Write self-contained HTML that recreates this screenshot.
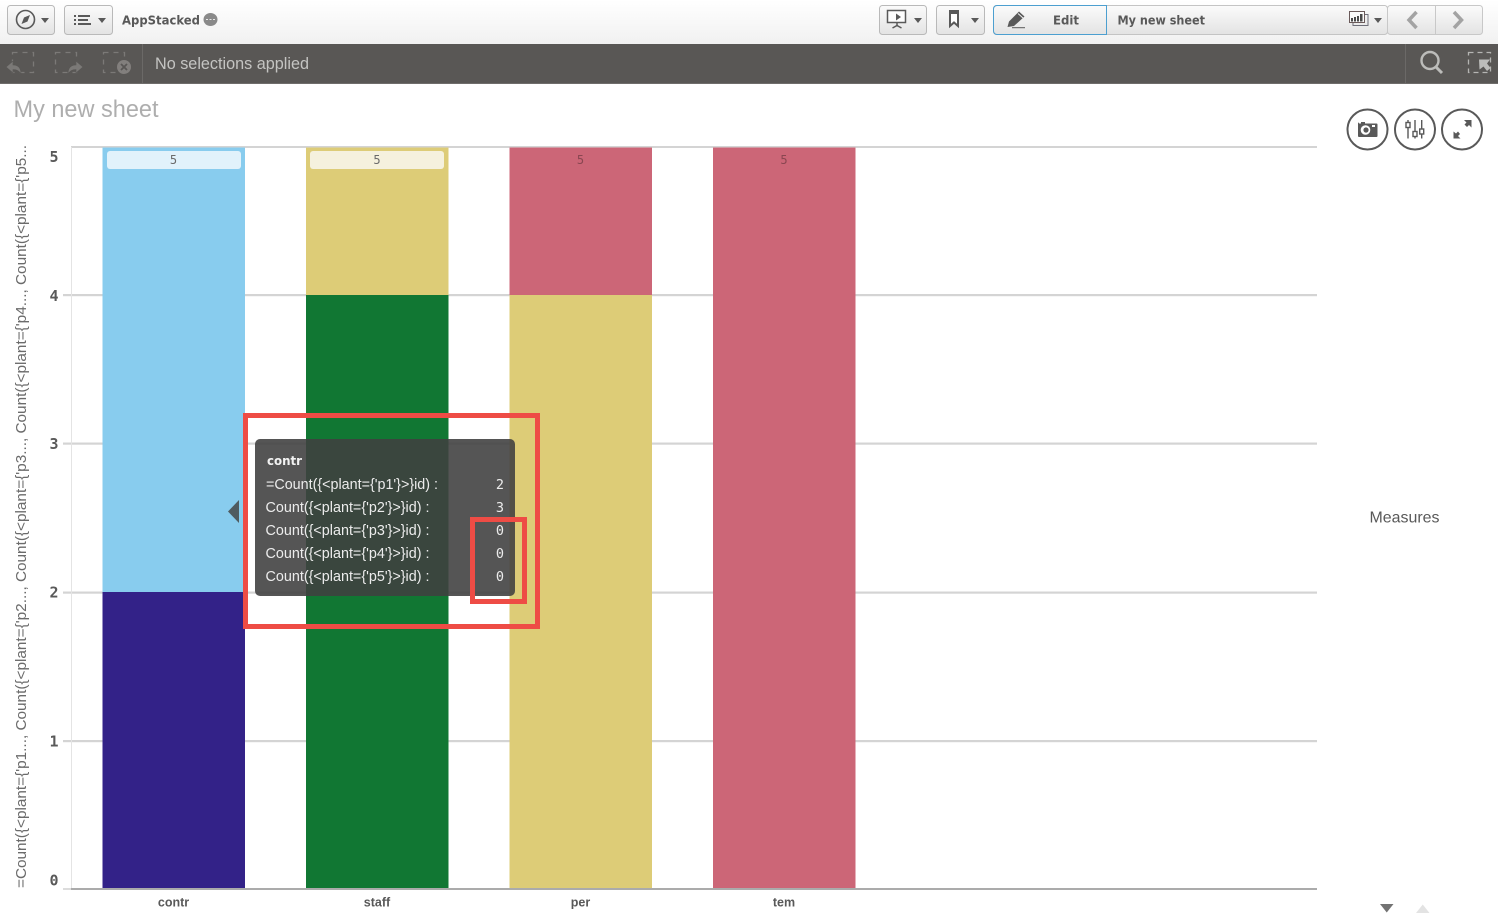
<!DOCTYPE html>
<html lang="en">
<head>
<meta charset="utf-8">
<title>My new sheet</title>
<style>
html,body{margin:0;padding:0;background:#fff;width:1498px;height:921px;overflow:hidden}
svg{display:block}
text{font-family:"Liberation Sans",sans-serif}
text.b{font-family:"DejaVu Sans",sans-serif;font-weight:700}
.m text,text.m{font-family:"DejaVu Sans Mono",monospace}
</style>
</head>
<body>
<svg width="1498" height="921" viewBox="0 0 1498 921" xmlns="http://www.w3.org/2000/svg">
<defs>
<linearGradient id="top" x1="0" y1="0" x2="0" y2="1"><stop offset="0" stop-color="#ffffff"/><stop offset="1" stop-color="#f1f1f1"/></linearGradient>
<linearGradient id="btn" x1="0" y1="0" x2="0" y2="1"><stop offset="0" stop-color="#fbfbfb"/><stop offset="1" stop-color="#e3e3e3"/></linearGradient>
</defs>
<rect width="1498" height="921" fill="#fff"/>

<!-- top bar -->
<rect width="1498" height="44" fill="url(#top)"/>
<rect x="7.500" y="5.500" width="47" height="29" rx="3" fill="url(#btn)" stroke="#b9b9b9"/>
<circle cx="25.500" cy="19.500" r="9" fill="none" stroke="#595959" stroke-width="1.600"/>
<path d="M30 15l-6 2.500-2.500 6.500 6-2.500z" fill="#595959"/>
<path d="M41 18h8l-4 5z" fill="#595959"/>
<rect x="64.500" y="5.500" width="48" height="29" rx="3" fill="url(#btn)" stroke="#b9b9b9"/>
<path d="M74 15h2v2h-2zM74 19h2v2h-2zM74 23h2v2h-2zM78 15h12v2H78zM78 19h10v2H78zM78 23h13v2H78z" fill="#595959"/>
<path d="M98 18h8l-4 5z" fill="#595959"/>
<text class="b" x="122" y="24.500" font-size="12.500" fill="#595959" textLength="78" lengthAdjust="spacingAndGlyphs">AppStacked</text>
<ellipse cx="210.500" cy="19.500" rx="7" ry="6.500" fill="#8a8a8a"/>
<path d="M206 19.500h2M209.500 19.500h2M213 19.500h2" stroke="#e8e8e8" stroke-width="1"/>

<rect x="879.500" y="5.500" width="47" height="29" rx="3" fill="url(#btn)" stroke="#b9b9b9"/>
<rect x="887.500" y="10.500" width="18" height="12" fill="#fdfdfd" stroke="#595959" stroke-width="1.500"/>
<path d="M896 13.500l5 3.500-5 3.500z" fill="#595959"/>
<path d="M897 23v3.500" stroke="#595959" stroke-width="1.500"/>
<path d="M892.500 28l4.500-2.500 4.500 2.500" stroke="#595959" stroke-width="1.500" fill="none"/>
<path d="M914 18h8l-4 5z" fill="#595959"/>
<rect x="936.500" y="5.500" width="48" height="29" rx="3" fill="url(#btn)" stroke="#b9b9b9"/>
<path d="M950 11h8v15l-4-3.500-4 3.500z" fill="#fff" stroke="#595959" stroke-width="2"/>
<path d="M949 10h10v4h-10z" fill="#595959"/>
<path d="M971 18h8l-4 5z" fill="#595959"/>

<rect x="993.500" y="5.500" width="394" height="29" rx="3" fill="url(#btn)" stroke="#c4c4c4"/>
<path d="M1106.500 5.500H997a3.500 3.500 0 0 0-3.500 3.500v22a3.500 3.500 0 0 0 3.500 3.500h109.500z" fill="url(#btn)" stroke="#4c9fd0"/>
<path d="M1007.500 27l1.500-5.500 10-10 5.500 5-10.500 9.500z" fill="#595959"/>
<path d="M1018 13.500l5 4.500" stroke="#f0f0f0" stroke-width="1"/>
<path d="M1012 27.700h13" stroke="#595959" stroke-width="1"/>
<text class="b" x="1053" y="24.500" font-size="12.500" fill="#595959" textLength="26" lengthAdjust="spacingAndGlyphs">Edit</text>
<text class="b" x="1117.500" y="24.500" font-size="12.500" fill="#595959" textLength="87.500" lengthAdjust="spacingAndGlyphs">My new sheet</text>
<path d="M1364.500 14.500h3.500v11h-15v-3" fill="none" stroke="#6f6f7a"/>
<rect x="1349.500" y="11.500" width="15" height="11" fill="#fafafa" stroke="#6a5a5a"/>
<path d="M1351 18h2v3.500h-2zM1354 17h2v4.500h-2zM1357 16h2v5.500h-2zM1360 14h2.500v7.500H1360z" fill="#4a4a4a"/>
<path d="M1374 18h8l-4 5z" fill="#595959"/>
<rect x="1387.500" y="5.500" width="95" height="29" rx="3" fill="url(#btn)" stroke="#c8c8c8"/>
<path d="M1435.500 6v28" stroke="#c8c8c8"/>
<path d="M1416.500 12l-7.500 8 7.500 8" fill="none" stroke="#a3a3a3" stroke-width="3.500"/>
<path d="M1454 12l7.500 8-7.500 8" fill="none" stroke="#a3a3a3" stroke-width="3.500"/>

<!-- selections bar -->
<rect y="44" width="1498" height="40" fill="#595755"/>
<rect y="83" width="1498" height="1" fill="#6f6d6b"/>
<rect x="142" y="44" width="1" height="39" fill="#6b6967"/>
<rect x="1405" y="44" width="1" height="39" fill="#6b6967"/>
<g fill="none" stroke="#7b7977" stroke-width="1.300" stroke-dasharray="5 5">
<rect x="12.500" y="52.500" width="21" height="20"/>
<rect x="55.500" y="52.500" width="21" height="20"/>
<rect x="103.500" y="52.500" width="21" height="20"/>
</g>
<path d="M6 67L13 61v4C18 65 21 68 21 74 19 71 17 69.500 13 69.500V73z" fill="#7b7977" stroke="#595755" stroke-width=".6"/>
<path d="M83 67L76 61v4C71 65 68 68 68 74 70 71 72 69.500 76 69.500V73z" fill="#7b7977" stroke="#595755" stroke-width=".6"/>
<circle cx="124" cy="67" r="7" fill="#827f7d"/>
<path d="M121 64l6 6M127 64l-6 6" stroke="#595755" stroke-width="1.800"/>
<text x="155" y="69" font-size="17" fill="#c4c4c2" textLength="154" lengthAdjust="spacingAndGlyphs">No selections applied</text>
<circle cx="1430" cy="60.500" r="8.500" fill="none" stroke="#bcbcba" stroke-width="2.400"/>
<path d="M1436 67l6 6" stroke="#bcbcba" stroke-width="3"/>
<rect x="1468.500" y="52.500" width="22" height="20" fill="none" stroke="#b5b5b3" stroke-width="1.300" stroke-dasharray="5 4"/>
<path d="M1479 59.500h11l-3 4 3.500 4.500-3.500 3-3.500-4.500-4 3z" fill="#bcbcba"/>

<!-- title -->
<text x="13.500" y="117" font-size="24" fill="#aeaeae" textLength="145" lengthAdjust="spacingAndGlyphs">My new sheet</text>

<!-- round tool buttons -->
<g fill="#fff" stroke="#595959" stroke-width="2">
<circle cx="1367.500" cy="129.500" r="20"/>
<circle cx="1415" cy="129.500" r="20"/>
<circle cx="1462" cy="129.500" r="20"/>
</g>
<path d="M1359 123.500h2v-1.500h4v1.500h11.500a1 1 0 0 1 1 1v11.500a1 1 0 0 1-1 1H1359a1 1 0 0 1-1-1v-12.500a1 1 0 0 1 1-1z" fill="#595959"/>
<circle cx="1365.500" cy="130" r="4.800" fill="#fff"/>
<circle cx="1366" cy="130" r="2.600" fill="#595959"/>
<rect x="1372" y="125" width="3" height="2" fill="#fff"/>
<g stroke="#595959" stroke-width="1.400" fill="#fff">
<path d="M1408 120v18.500M1415 120v18.500M1421.700 120v18.500"/>
<rect x="1406" y="122.500" width="4" height="5"/>
<rect x="1413" y="131.500" width="4" height="5"/>
<rect x="1419.700" y="129" width="4" height="5"/>
</g>
<path d="M1464 120h7.500v7.500l-2.500-2.500-2 2-2.500-2.500 2-2z" fill="#595959"/>
<path d="M1453.500 131.500v7h7l-2.500-2.500 2-2-2-2.500-2 2z" fill="#595959"/>

<!-- axis and grid -->
<g fill="#d4d4d4">
<rect x="71" y="146" width="1246" height="2"/>
<rect x="63" y="294" width="1254" height="2.200"/>
<rect x="63" y="442.500" width="1254" height="2.200"/>
<rect x="63" y="591.500" width="1254" height="2.200"/>
<rect x="63" y="740" width="1254" height="2.200"/>
</g>
<rect x="71" y="147" width="1" height="742" fill="#e4e4e4"/>
<rect x="71" y="888" width="1246" height="2" fill="#ababab"/>
<rect x="63" y="888" width="8" height="2" fill="#dcdcdc"/>

<!-- bars -->
<rect x="102.500" y="147.500" width="142.500" height="444.500" fill="#88ccee"/>
<rect x="102.500" y="592" width="142.500" height="296" fill="#332288"/>
<rect x="306" y="147.500" width="142.500" height="147.500" fill="#ddcc77"/>
<rect x="306" y="295" width="142.500" height="593" fill="#117733"/>
<rect x="509.500" y="147.500" width="142.500" height="147.500" fill="#cc6677"/>
<rect x="509.500" y="295" width="142.500" height="593" fill="#ddcc77"/>
<rect x="713" y="147.500" width="142.500" height="740.500" fill="#cc6677"/>

<!-- value labels -->
<rect x="107" y="151" width="134" height="18" rx="3" fill="#e1f2fb"/>
<rect x="310" y="151" width="134" height="18" rx="3" fill="#f5f1dd"/>
<g font-size="12" text-anchor="middle" class="m">
<text x="173.500" y="164" fill="#6b6b6b">5</text>
<text x="377" y="164" fill="#6b6b6b">5</text>
<text x="580.500" y="164" fill="#8a4651">5</text>
<text x="784" y="164" fill="#8a4651">5</text>
</g>

<!-- y labels -->
<g class="m" font-size="15" font-weight="700" fill="#595959" text-anchor="middle">
<text x="54" y="162">5</text>
<text x="54" y="301">4</text>
<text x="54" y="449">3</text>
<text x="54" y="597.500">2</text>
<text x="54" y="746.500">1</text>
<text x="54" y="885.500">0</text>
</g>

<!-- y title -->
<text transform="translate(26 888) rotate(-90)" font-size="15" fill="#6b6b6b" textLength="743" lengthAdjust="spacingAndGlyphs">=Count({&lt;plant={'p1..., Count({&lt;plant={'p2..., Count({&lt;plant={'p3..., Count({&lt;plant={'p4..., Count({&lt;plant={'p5...</text>

<!-- x labels -->
<g font-size="12.500" font-weight="700" fill="#595959" text-anchor="middle">
<text x="173.500" y="906.500">contr</text>
<text x="377" y="906.500">staff</text>
<text x="580.500" y="906.500">per</text>
<text x="784" y="906.500">tem</text>
</g>

<!-- legend -->
<text x="1369.500" y="522.500" font-size="16" fill="#595959" textLength="70" lengthAdjust="spacingAndGlyphs">Measures</text>
<path d="M1380 904h13.500l-6.750 8.500z" fill="#737373"/>
<path d="M1416 913h13.500l-6.750-8.500z" fill="#e3e3e3"/>

<!-- tooltip -->
<path d="M239 500v23l-11-11.500z" fill="#4f5b60"/>
<rect x="255" y="439" width="260" height="157" rx="5" fill="#404040" fill-opacity=".89"/>
<text class="b" x="267" y="465" font-size="12.500" fill="#f2f2f2" textLength="35" lengthAdjust="spacingAndGlyphs">contr</text>
<g font-size="14.500" fill="#ececec">
<text x="266" y="489" textLength="172" lengthAdjust="spacingAndGlyphs">=Count({&lt;plant={'p1'}&gt;}id) :</text>
<text x="265.500" y="512" textLength="164" lengthAdjust="spacingAndGlyphs">Count({&lt;plant={'p2'}&gt;}id) :</text>
<text x="265.500" y="535" textLength="164" lengthAdjust="spacingAndGlyphs">Count({&lt;plant={'p3'}&gt;}id) :</text>
<text x="265.500" y="558" textLength="164" lengthAdjust="spacingAndGlyphs">Count({&lt;plant={'p4'}&gt;}id) :</text>
<text x="265.500" y="581" textLength="164" lengthAdjust="spacingAndGlyphs">Count({&lt;plant={'p5'}&gt;}id) :</text>
</g>
<g class="m" font-size="13.500" fill="#ececec" text-anchor="end">
<text x="504" y="489">2</text>
<text x="504" y="512">3</text>
<text x="504" y="535">0</text>
<text x="504" y="558">0</text>
<text x="504" y="581">0</text>
</g>

<!-- red annotations -->
<rect x="245.500" y="415.500" width="292" height="211" fill="none" stroke="#ee4c45" stroke-width="5"/>
<rect x="472.500" y="519.500" width="52" height="82" fill="none" stroke="#ee4c45" stroke-width="5"/>
</svg>
</body>
</html>
